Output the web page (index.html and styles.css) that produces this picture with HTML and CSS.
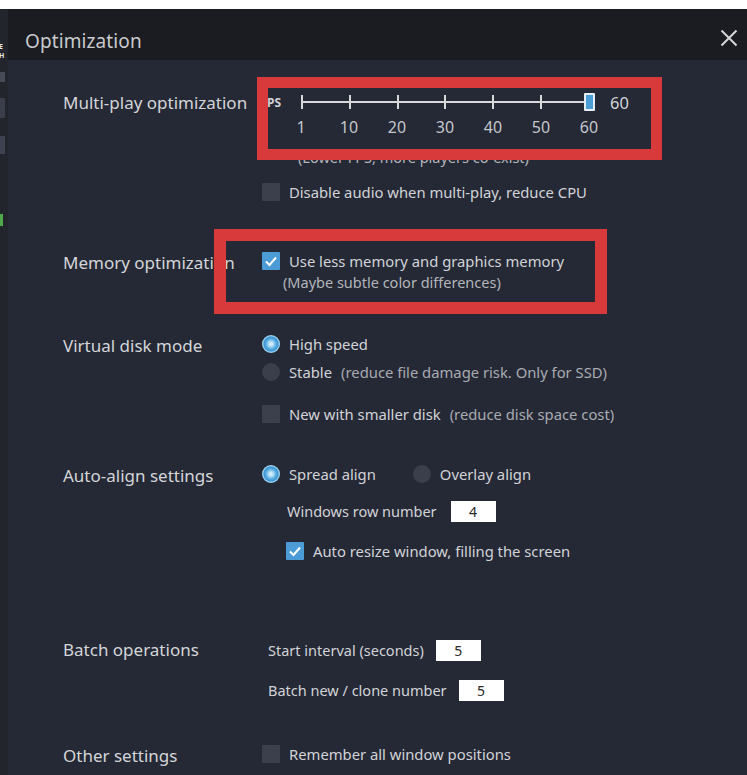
FILE: index.html
```html
<!DOCTYPE html>
<html>
<head>
<meta charset="utf-8">
<link rel="stylesheet" href="styles.css">
</head>
<body>
<div class="topband"></div>
<div class="app">
  <div class="strip">
    <div class="strip-text">E</div>
    <div class="strip-text">H</div>
    <div class="strip-block b1"></div>
    <div class="strip-block b2"></div>
    <div class="strip-block b3"></div>
    <div class="strip-green"></div>
  </div>
  <div class="dialog">
    <div class="titlebar">
      <span class="title">Optimization</span>
      <svg class="close" width="18" height="18" viewBox="0 0 18 18"><path d="M1.5 1.5 L16.5 16.5 M16.5 1.5 L1.5 16.5" stroke="#d6d6d6" stroke-width="2" fill="none"/></svg>
    </div>
    <div class="content">
      <section class="sec s1">
        <div class="label">Multi-play optimization</div>
        <div class="controls">
          <div class="slider-row">
            <span class="ps">PS</span>
            <div class="track">
              <div class="line"></div>
              <div class="ticks"><i></i><i></i><i></i><i></i><i></i><i></i><i></i></div>
              <div class="thumb"></div>
            </div>
            <span class="val">60</span>
          </div>
          <div class="scale"><span>1</span><span>10</span><span>20</span><span>30</span><span>40</span><span>50</span><span>60</span></div>
          <div class="hint">(Lower FPS, more players co-exist)</div>
          <div class="row r-audio"><span class="cb"></span><span>Disable audio when multi-play, reduce CPU</span></div>
        </div>
      </section>

      <section class="sec s2">
        <div class="label">Memory optimization</div>
        <div class="controls">
          <div class="row"><span class="cb on"><svg width="18" height="18" viewBox="0 0 18 18"><path d="M4 9.5 L7.5 13 L14 5.5" stroke="#fff" stroke-width="2" fill="none"/></svg></span><span>Use less memory and graphics memory</span></div>
          <div class="sub">(Maybe subtle color differences)</div>
        </div>
      </section>

      <section class="sec s3">
        <div class="label">Virtual disk mode</div>
        <div class="controls">
          <div class="row"><span class="rb on"></span><span>High speed</span></div>
          <div class="row r-stable"><span class="rb"></span><span>Stable</span><span class="muted">(reduce file damage risk. Only for SSD)</span></div>
          <div class="row r-disk"><span class="cb"></span><span>New with smaller disk</span><span class="muted">(reduce disk space cost)</span></div>
        </div>
      </section>

      <section class="sec s4">
        <div class="label">Auto-align settings</div>
        <div class="controls">
          <div class="row"><span class="rb on"></span><span>Spread align</span><span class="rb rb-gap"></span><span>Overlay align</span></div>
          <div class="row r-winrow small"><span>Windows row number</span><span class="input">4</span></div>
          <div class="row r-resize"><span class="cb on"><svg width="18" height="18" viewBox="0 0 18 18"><path d="M4 9.5 L7.5 13 L14 5.5" stroke="#fff" stroke-width="2" fill="none"/></svg></span><span>Auto resize window, filling the screen</span></div>
        </div>
      </section>

      <section class="sec s5">
        <div class="label">Batch operations</div>
        <div class="controls">
          <div class="row small r-int"><span>Start interval (seconds)</span><span class="input">5</span></div>
          <div class="row small r-batch"><span>Batch new / clone number</span><span class="input">5</span></div>
        </div>
      </section>

      <section class="sec s6">
        <div class="label">Other settings</div>
        <div class="controls">
          <div class="row"><span class="cb"></span><span>Remember all window positions</span></div>
        </div>
      </section>
    </div>
    <div class="mark mark1"></div>
    <div class="mark mark2"></div>
  </div>
</div>
</body>
</html>
```
FILE: styles.css
```css
* { box-sizing: border-box; }
html, body { margin: 0; padding: 0; }
body {
  background: #ffffff;
  width: 747px;
  height: 775px;
  overflow: hidden;
  font-family: "Noto Sans", "Open Sans", sans-serif;
  color: #d2d3d6;
}
.topband { height: 9px; background: #ffffff; }
.app { display: flex; height: 766px; }
.strip {
  width: 8px;
  background: #23252c;
  display: flex;
  flex-direction: column;
}
.strip-text {
  font-size: 7px;
  line-height: 9px;
  height: 9px;
  color: #e0e0e0;
  margin-left: -1px;
  font-weight: bold;
}
.strip-text:first-child { margin-top: 33px; }
.strip-block { width: 5px; background: #474b57; }
.strip-block.b1 { height: 10px; margin-top: 12px; }
.strip-block.b2 { height: 20px; margin-top: 16px; background: #3a3e4a; }
.strip-block.b3 { height: 18px; margin-top: 18px; background: #3e4250; }
.strip-green { width: 3px; height: 12px; background: #4fa84a; margin-top: 60px; }

.dialog { flex: 1; background: #252936; position: relative; }
.titlebar {
  height: 51px;
  background: #1b1c21;
  display: flex;
  align-items: center;
  justify-content: space-between;
  padding: 12px 9px 0 17px;
}
.title { font-size: 19px; color: #c9cacd; letter-spacing: 0.1px; }
.close { margin-top: -6px; }

.content { padding-left: 55px; padding-top: 30px; font-size: 14.8px; }
.sec { display: grid; grid-template-columns: 199px 1fr; }
.label { font-size: 17px; color: #d4d5d8; height: 24px; line-height: 24px; white-space: nowrap; }
.controls { display: flex; flex-direction: column; }
.row { display: flex; align-items: center; height: 20px; white-space: nowrap; }
.row > span + span { margin-left: 9px; }
.muted { color: #a9abb1; }
.small { font-size: 14.5px; }

/* slider */
.slider-row { display: flex; align-items: center; height: 24px; }
.ps { font-size: 12px; font-weight: bold; color: #cfd0d4; margin-left: 5px; width: 34px; }
.track { position: relative; width: 289px; height: 16px; }
.track .line { position: absolute; left: 0; right: 0; top: 7px; height: 2px; background: #d8d8da; }
.ticks { display: flex; justify-content: space-between; height: 16px; }
.ticks i { display: block; width: 2px; height: 14px; margin-top: 1px; background: #d8d8da; }
.thumb {
  position: absolute; right: -5px; top: -1px;
  width: 11px; height: 18px;
  background: #4b9dd6; border: 2px solid #e6eef5; border-radius: 1px;
}
.val { margin-left: 20px; font-size: 16.5px; color: #d4d5d8; }
.scale { display: flex; margin-left: 15px; margin-top: 3px; height: 20px; font-size: 16px; color: #c4c6ca; }
.scale span { width: 48px; text-align: center; line-height: 20px; }
.hint { margin-left: 36px; margin-top: 11px; height: 18px; line-height: 18px; font-size: 14.5px; color: #b3b5ba; }
.r-audio { margin-top: 16px; }

/* checkbox & radio */
.cb { width: 18px; height: 18px; background: #3c3f4c; border-radius: 1px; flex: none; display: block; }
.cb.on { background: #4a9bd6; }
.cb svg { display: block; }
.rb { width: 18px; height: 18px; border-radius: 50%; background: #3b3e4b; flex: none; display: block; }
.rb.on {
  background: radial-gradient(circle, #dff2fb 0, #bfe3f6 2px, #58aee3 5px, #3f93cf 7px, #8ccbee 8px, #a9daf3 9px);
}
.row > .rb-gap { margin-left: 37px; }

.s1 .label { margin-top: 1px; }
.s2 { margin-top: 49px; }
.s2 .label { margin-top: 0; }
.sub { margin-left: 21px; margin-top: 2px; height: 18px; line-height: 18px; font-size: 14.5px; color: #b3b5ba; }
.s3 { margin-top: 43px; }
.s3 .label { margin-top: 0; }
.r-stable { margin-top: 8px; }
.r-disk { margin-top: 22px; }
.s4 { margin-top: 40px; }
.r-winrow { margin-top: 16px; margin-left: 25px; height: 22px; }
.r-resize { margin-top: 19px; margin-left: 24px; }
.s5 { margin-top: 78px; }
.s5 .label { margin-top: -1px; }
.r-int { margin-left: 6px; height: 22px; }
.r-batch { margin-top: 18px; margin-left: 6px; height: 22px; }
.s6 { margin-top: 43px; }
.s6 .label { margin-top: 0; }

.input {
  display: inline-block;
  width: 45px; height: 21px; line-height: 21px;
  background: #ffffff; color: #2a2a2a;
  text-align: center; font-size: 14px;
}
.row > .input { margin-left: 12px; }
.r-winrow > .input { margin-left: 14px; }

/* red annotation boxes drawn over the screenshot */
.mark { position: absolute; border: 11px solid #d8393b; }
.mark1 { left: 249px; top: 68px; width: 405px; height: 83px; }
.mark2 { left: 206px; top: 220px; width: 393px; height: 85px; border-width: 12px; }
```
